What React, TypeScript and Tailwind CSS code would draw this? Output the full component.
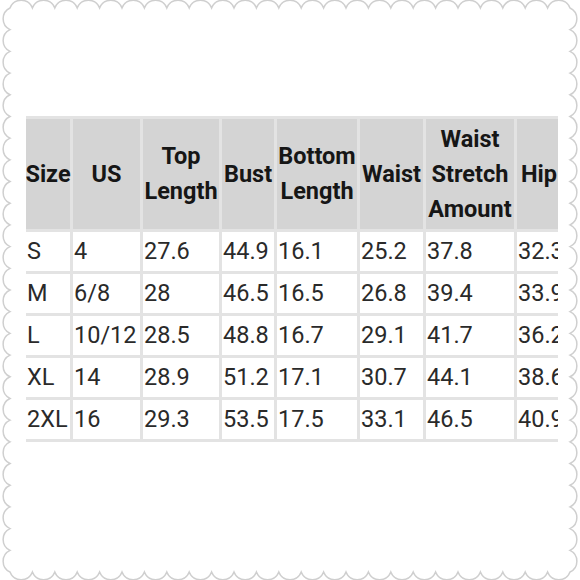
import React from "react";

const headers = ["Size", "US", "Top Length", "Bust", "Bottom Length", "Waist", "Waist Stretch Amount", "Hip"];

const rows = [
  ["S", "4", "27.6", "44.9", "16.1", "25.2", "37.8", "32.3"],
  ["M", "6/8", "28", "46.5", "16.5", "26.8", "39.4", "33.9"],
  ["L", "10/12", "28.5", "48.8", "16.7", "29.1", "41.7", "36.2"],
  ["XL", "14", "28.9", "51.2", "17.1", "30.7", "44.1", "38.6"],
  ["2XL", "16", "29.3", "53.5", "17.5", "33.1", "46.5", "40.9"],
];

// scalloped stamp edge, arcs bulge outward going clockwise
function scallopPath(L: number, T: number, R: number, B: number, r: number) {
  let d = `M ${L} ${T}`;
  const side = (x0: number, y0: number, x1: number, y1: number) => {
    const len = Math.hypot(x1 - x0, y1 - y0);
    const n = Math.round(len / 22);
    for (let i = 1; i <= n; i++) {
      const x = x0 + ((x1 - x0) * i) / n;
      const y = y0 + ((y1 - y0) * i) / n;
      d += ` A ${r} ${r} 0 0 1 ${x.toFixed(2)} ${y.toFixed(2)}`;
    }
  };
  side(L, T, R, T);
  side(R, T, R, B);
  side(R, B, L, B);
  side(L, B, L, T);
  return d + " Z";
}

export default function App() {
  return (
    <div className="relative w-[580px] h-[580px] bg-white overflow-hidden" style={{ fontFamily: "Roboto, 'Noto Sans', sans-serif" }}>
      <svg className="absolute inset-0" width="580" height="580" viewBox="0 0 580 580">
        <path d={scallopPath(10, 8, 570, 572, 12)} fill="#fff" stroke="#cfcfcf" strokeWidth="1.5" />
      </svg>

      <div className="relative pt-[116px] pl-[26px]">
        <div className="w-[532px] overflow-hidden bg-[#e3e3e3] py-[3px]">
          <div className="grid grid-cols-[44px_67px_76px_52px_80px_63px_88px_44px] gap-[3px] w-max">
            {headers.map((h) => (
              <div
                key={h}
                className="h-[110px] bg-[#d4d4d4] flex items-center justify-center text-center text-[23.5px] leading-[35px] font-bold text-[#161616] whitespace-pre-line"
              >
                {h.split(" ").join("\n")}
              </div>
            ))}
            {rows.map((r) =>
              r.map((c, i) => (
                <div
                  key={r[0] + i}
                  className="h-[39px] bg-white flex items-center pl-[1px] pt-[1px] text-[23.5px] text-[#2a2a2a] whitespace-nowrap"
                >
                  {c}
                </div>
              ))
            )}
          </div>
        </div>
      </div>
    </div>
  );
}
